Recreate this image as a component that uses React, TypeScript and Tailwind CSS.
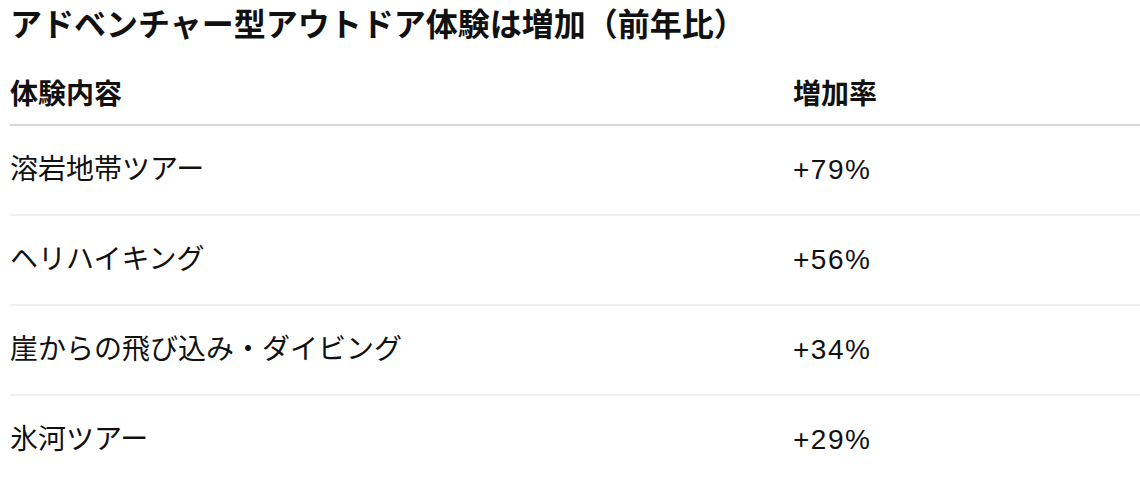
import React from 'react';

const rows = [
  { name: '溶岩地帯ツアー', rate: '+79%' },
  { name: 'ヘリハイキング', rate: '+56%' },
  { name: '崖からの飛び込み・ダイビング', rate: '+34%' },
  { name: '氷河ツアー', rate: '+29%' },
];

const App: React.FC = () => {
  return (
    <div
      className="min-h-screen bg-white pl-[10px] text-[#111111]"
      style={{ fontFamily: '"Liberation Sans", "Noto Sans CJK JP", sans-serif' }}
    >
      <h1 className="h-[50px] text-[32px] leading-[50px] font-bold">
        アドベンチャー型アウトドア体験は増加（前年比）
      </h1>

      <div className="mt-[16px]">
        {/* header */}
        <div className="grid grid-cols-[783px_1fr] h-[60px] items-center border-b-2 border-[#d6d6d6] text-[28px] font-bold">
          <div>体験内容</div>
          <div>増加率</div>
        </div>

        {rows.map((row) => (
          <div
            key={row.name}
            className="grid grid-cols-[783px_1fr] h-[90px] items-center border-b-2 border-[#f0f0f0] text-[28px]"
          >
            <div>{row.name}</div>
            <div className="tracking-[1.5px]">{row.rate}</div>
          </div>
        ))}
      </div>
    </div>
  );
};

export default App;
